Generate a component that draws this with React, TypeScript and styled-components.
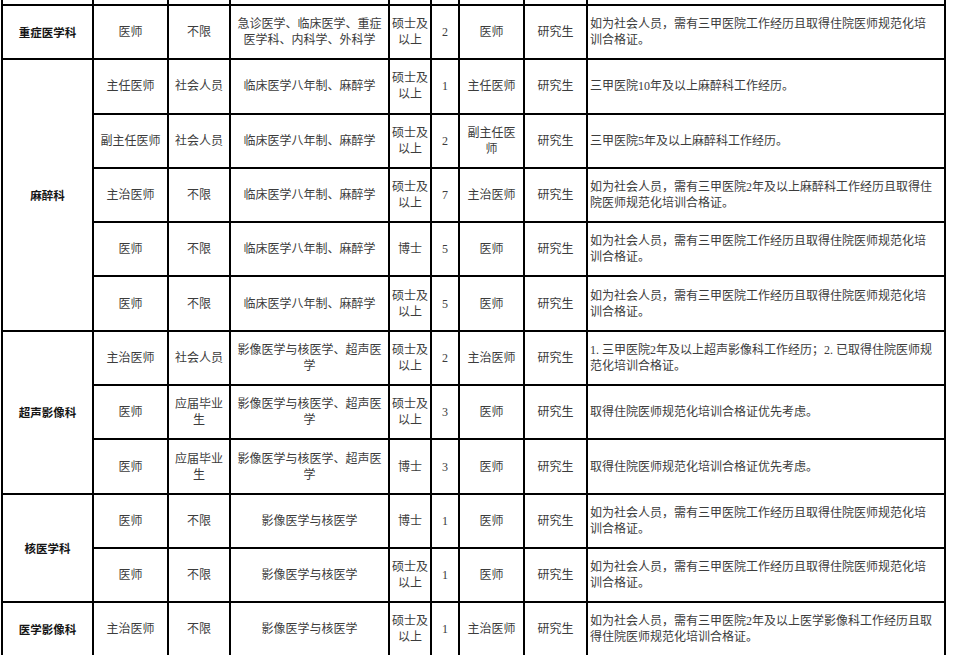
import React from 'react';
import styled, { createGlobalStyle } from 'styled-components';

type Post = {
  role: string;
  source: string;
  major: string;
  edu: string;
  count: string;
  title: string;
  degree: string;
  note: string;
};

type Dept = { name: string; posts: Post[] };

const SOCIAL = '如为社会人员，需有三甲医院工作经历且取得住院医师规范化培\n训合格证。';
const ANES = '临床医学八年制、麻醉学';
const ULTRA = '影像医学与核医学、超声医\n学';
const NUCLEAR = '影像医学与核医学';
const PRIORITY = '取得住院医师规范化培训合格证优先考虑。';

const depts: Dept[] = [
  {
    name: '重症医学科',
    posts: [
      {
        role: '医师',
        source: '不限',
        major: '急诊医学、临床医学、重症\n医学科、内科学、外科学',
        edu: '硕士及以上',
        count: '2',
        title: '医师',
        degree: '研究生',
        note: SOCIAL,
      },
    ],
  },
  {
    name: '麻醉科',
    posts: [
      { role: '主任医师', source: '社会人员', major: ANES, edu: '硕士及以上', count: '1', title: '主任医师', degree: '研究生', note: '三甲医院10年及以上麻醉科工作经历。' },
      { role: '副主任医师', source: '社会人员', major: ANES, edu: '硕士及以上', count: '2', title: '副主任医师', degree: '研究生', note: '三甲医院5年及以上麻醉科工作经历。' },
      {
        role: '主治医师',
        source: '不限',
        major: ANES,
        edu: '硕士及以上',
        count: '7',
        title: '主治医师',
        degree: '研究生',
        note: '如为社会人员，需有三甲医院2年及以上麻醉科工作经历且取得住\n院医师规范化培训合格证。',
      },
      { role: '医师', source: '不限', major: ANES, edu: '博士', count: '5', title: '医师', degree: '研究生', note: SOCIAL },
      { role: '医师', source: '不限', major: ANES, edu: '硕士及以上', count: '5', title: '医师', degree: '研究生', note: SOCIAL },
    ],
  },
  {
    name: '超声影像科',
    posts: [
      {
        role: '主治医师',
        source: '社会人员',
        major: ULTRA,
        edu: '硕士及以上',
        count: '2',
        title: '主治医师',
        degree: '研究生',
        note: '1. 三甲医院2年及以上超声影像科工作经历；2. 已取得住院医师规\n范化培训合格证。',
      },
      { role: '医师', source: '应届毕业生', major: ULTRA, edu: '硕士及以上', count: '3', title: '医师', degree: '研究生', note: PRIORITY },
      { role: '医师', source: '应届毕业生', major: ULTRA, edu: '博士', count: '3', title: '医师', degree: '研究生', note: PRIORITY },
    ],
  },
  {
    name: '核医学科',
    posts: [
      { role: '医师', source: '不限', major: NUCLEAR, edu: '博士', count: '1', title: '医师', degree: '研究生', note: SOCIAL },
      { role: '医师', source: '不限', major: NUCLEAR, edu: '硕士及以上', count: '1', title: '医师', degree: '研究生', note: SOCIAL },
    ],
  },
  {
    name: '医学影像科',
    posts: [
      {
        role: '主治医师',
        source: '不限',
        major: NUCLEAR,
        edu: '硕士及以上',
        count: '1',
        title: '主治医师',
        degree: '研究生',
        note: '如为社会人员，需有三甲医院2年及以上医学影像科工作经历且取\n得住院医师规范化培训合格证。',
      },
    ],
  },
];

const GlobalStyle = createGlobalStyle`
  html, body {
    margin: 0;
    padding: 0;
    background: #fff;
  }
`;

export default function App() {
  return (
    <>
      <GlobalStyle />
      <Page>
        <Sheet>
          {Array.from({ length: 9 }).map((_, i) => (
            <Stub key={`stub-${i}`} />
          ))}
          {depts.map((d) => (
            <React.Fragment key={d.name}>
              <DeptCell $span={d.posts.length}>{d.name}</DeptCell>
              {d.posts.map((p, i) => (
                <React.Fragment key={i}>
                  <Cell>{p.role}</Cell>
                  <Cell>{p.source}</Cell>
                  <Cell>{p.major}</Cell>
                  <Cell $tight>{p.edu}</Cell>
                  <Cell>{p.count}</Cell>
                  <Cell>{p.title}</Cell>
                  <Cell>{p.degree}</Cell>
                  <NoteCell>{p.note}</NoteCell>
                </React.Fragment>
              ))}
            </React.Fragment>
          ))}
        </Sheet>
      </Page>
    </>
  );
}

const Page = styled.div`
  padding-left: 1px;
  width: 952px;
`;

const Sheet = styled.div`
  display: grid;
  width: fit-content;
  grid-template-columns: 89px 73px 60px 157px 40px 26px 63px 61px 356px;
  grid-template-rows: 4px;
  grid-auto-rows: 52.3px;
  gap: 2px;
  padding: 0 2px 2px;
  background: #000;
`;

const Stub = styled.div`
  background: #fff;
`;

const Cell = styled.div<{ $tight?: boolean }>`
  background: #fff;
  display: flex;
  align-items: center;
  justify-content: center;
  text-align: center;
  padding: 0 ${(p) => (p.$tight ? 1 : 3)}px;
  white-space: pre-line;
  font-family: 'Liberation Serif', 'Noto Sans CJK SC', serif;
  font-size: 12px;
  line-height: 16px;
  color: #3c3c3c;
`;

const DeptCell = styled.div<{ $span: number }>`
  grid-row: span ${(p) => p.$span};
  background: #fff;
  display: flex;
  align-items: center;
  justify-content: center;
  font-family: 'Noto Sans CJK SC', sans-serif;
  font-weight: 700;
  font-size: 11.5px;
  color: #151515;
`;

const NoteCell = styled.div`
  background: #fff;
  display: flex;
  align-items: center;
  padding: 0 4px 0 2px;
  white-space: pre-line;
  font-family: 'Liberation Serif', 'Noto Sans CJK SC', serif;
  font-size: 12px;
  line-height: 16px;
  color: #3c3c3c;
`;
